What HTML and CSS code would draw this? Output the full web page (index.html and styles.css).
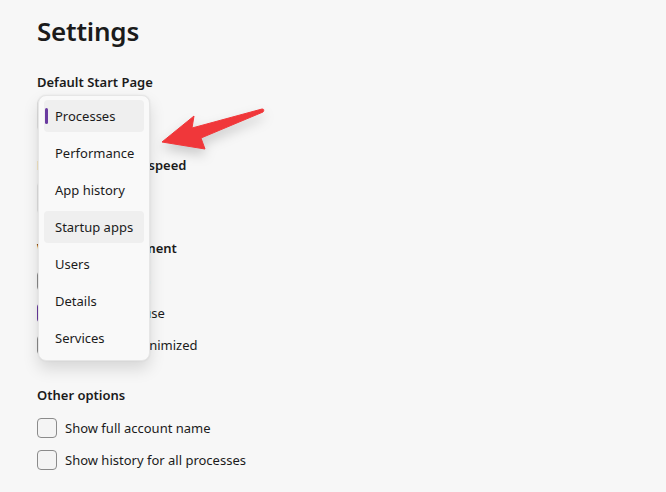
FILE: index.html
```html
<!DOCTYPE html>
<html lang="en">
<head>
<meta charset="utf-8">
<title>Settings</title>
<link rel="stylesheet" href="styles.css">
</head>
<body>
<main class="page">
  <h1 class="title">Settings</h1>

  <section class="section">
    <h2 class="heading">Default Start Page</h2>
    <div class="combo"><span>Processes</span></div>
  </section>

  <section class="section">
    <h2 class="heading">Real time update speed</h2>
    <div class="combo"><span>Normal</span></div>
  </section>

  <section class="section">
    <h2 class="heading">Window management</h2>
    <label class="check-row"><span class="box"></span><span>Always on top</span></label>
    <label class="check-row"><span class="box checked"><svg viewBox="0 0 20 20" width="20" height="20"><path d="M5.5 10.5l3 3 6-7" fill="none" stroke="#fff" stroke-width="1.5" stroke-linecap="round" stroke-linejoin="round"/></svg></span><span>Minimize on use</span></label>
    <label class="check-row"><span class="box"></span><span>Hide when minimized</span></label>
  </section>

  <section class="section">
    <h2 class="heading">Other options</h2>
    <label class="check-row"><span class="box"></span><span>Show full account name</span></label>
    <label class="check-row"><span class="box"></span><span>Show history for all processes</span></label>
  </section>

  <ul class="menu">
    <li class="item active"><span class="accent"></span>Processes</li>
    <li class="item">Performance</li>
    <li class="item">App history</li>
    <li class="item hover">Startup apps</li>
    <li class="item">Users</li>
    <li class="item">Details</li>
    <li class="item">Services</li>
  </ul>

  <svg class="arrow" viewBox="0 0 120 50" width="120" height="50">
    <path d="M12 39 L44 13 L42 25 L112 6 Q115 6 113 9 L51 35 L55 46 Z" fill="#f0373a" stroke="#f0373a" stroke-width="1" stroke-linejoin="round"/>
  </svg>
</main>
</body>
</html>
```

FILE: styles.css
```css
* { box-sizing: border-box; }
html, body {
  margin: 0;
  padding: 0;
  background: #f7f7f7;
}
body {
  font-family: "Noto Sans", "Open Sans", sans-serif;
  color: #1b1b1b;
  width: 666px;
  height: 492px;
  overflow: hidden;
}
.page {
  position: relative;
  padding: 11px 37px 0;
  display: flex;
  flex-direction: column;
}
.title {
  margin: 0 0 21px;
  font-size: 26px;
  line-height: 40px;
  font-weight: 600;
  letter-spacing: -0.2px;
}
.section {
  display: flex;
  flex-direction: column;
  margin-bottom: 24px;
}
.heading {
  margin: 0 0 7px;
  font-size: 13px;
  line-height: 20px;
  font-weight: 600;
}
.combo {
  width: 100px;
  height: 32px;
  border: 1px solid #e2e2e2;
  border-radius: 4px;
  background: #fdfdfd;
  font-size: 13px;
  display: flex;
  align-items: center;
  padding-left: 11px;
}
.check-row {
  height: 32px;
  display: flex;
  align-items: center;
  gap: 8px;
  font-size: 13px;
}
.box {
  width: 20px;
  height: 20px;
  border: 1px solid #8b8b8b;
  border-radius: 4px;
  background: #f4f4f4;
  display: flex;
}
.box.checked {
  background: #6a3ba0;
  border-color: #6a3ba0;
}
.box.checked svg { margin: -1px; }

.menu {
  position: absolute;
  top: 95px;
  left: 38px;
  width: 112px;
  margin: 0;
  padding: 4px 5px 6px;
  list-style: none;
  background: #f9f9f9;
  border: 1px solid #e6e6e6;
  border-radius: 8px;
  box-shadow: 0 8px 16px rgba(0,0,0,0.13), 0 0 2px rgba(0,0,0,0.08);
  display: flex;
  flex-direction: column;
  gap: 5px;
}
.item {
  position: relative;
  height: 32px;
  border-radius: 4px;
  display: flex;
  align-items: center;
  padding-left: 11px;
  font-size: 13px;
  color: #1b1b1b;
  white-space: nowrap;
}
.item.active, .item.hover { background: #efefef; }
.accent {
  position: absolute;
  left: 1px;
  top: 8px;
  width: 3px;
  height: 16px;
  border-radius: 2px;
  background: #6a3ba0;
}
.arrow {
  position: absolute;
  left: 150px;
  top: 103px;
  filter: drop-shadow(0 6px 6px rgba(0,0,0,0.18));
}
```
